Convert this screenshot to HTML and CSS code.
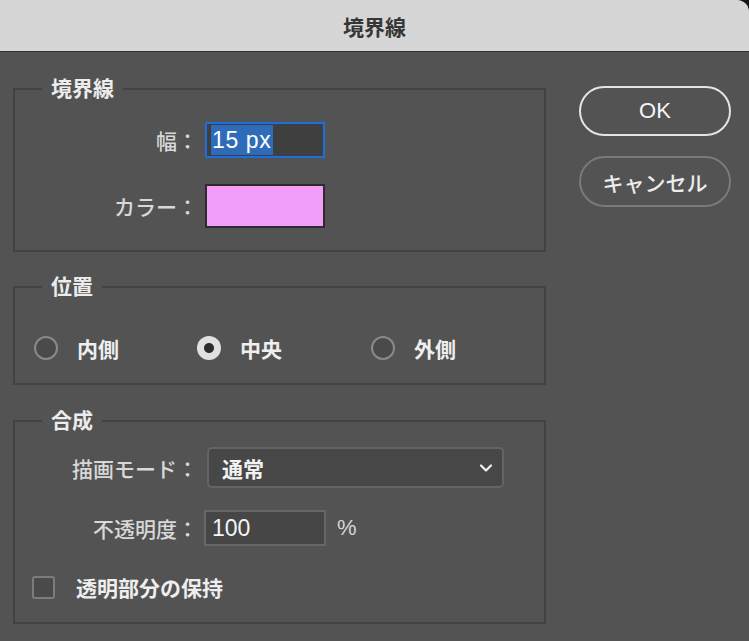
FILE: index.html
```html
<!DOCTYPE html>
<html lang="ja">
<head>
<meta charset="utf-8">
<title>境界線</title>
<link rel="stylesheet" href="styles.css">
</head>
<body>
<div class="window">
  <div class="titlebar">境界線</div>
  <div class="main">
    <div class="left">
      <fieldset class="group g1">
        <legend>境界線</legend>
        <div class="row">
          <span class="label">幅：</span>
          <div class="input focused"><span class="sel">15 px</span></div>
        </div>
        <div class="row row-color">
          <span class="label">カラー：</span>
          <div class="swatch"></div>
        </div>
      </fieldset>
      <fieldset class="group g2">
        <legend>位置</legend>
        <div class="radios">
          <div class="radio-item"><span class="radio"></span><span class="rlabel">内側</span></div>
          <div class="radio-item"><span class="radio checked"></span><span class="rlabel">中央</span></div>
          <div class="radio-item"><span class="radio"></span><span class="rlabel">外側</span></div>
        </div>
      </fieldset>
      <fieldset class="group g3">
        <legend>合成</legend>
        <div class="row">
          <span class="label">描画モード：</span>
          <div class="select"><span class="sel-text">通常</span>
            <svg class="chev" width="14" height="10" viewBox="0 0 14 10"><path d="M2 2.5 L7 7.5 L12 2.5" fill="none" stroke="#f0f0f0" stroke-width="2.2" stroke-linecap="round" stroke-linejoin="round"/></svg>
          </div>
        </div>
        <div class="row row-op">
          <span class="label">不透明度：</span>
          <div class="input plain">100</div>
          <span class="unit">%</span>
        </div>
        <div class="row row-check">
          <span class="checkbox"></span>
          <span class="clabel">透明部分の保持</span>
        </div>
      </fieldset>
    </div>
    <div class="right">
      <div class="btn primary">OK</div>
      <div class="btn secondary">キャンセル</div>
    </div>
  </div>
</div>
</body>
</html>
```
FILE: styles.css
```css
html {
  background: #15151c;
}
body {
  margin: 0;
  font-family: "Liberation Sans", "Noto Sans CJK JP", sans-serif;
  font-size: 21px;
  color: #e6e6e6;
}
.window {
  background: #535353;
  min-height: 641px;
  border-top-right-radius: 12px;
  overflow: hidden;
}
.titlebar {
  height: 51px;
  background: #d6d6d6;
  border-bottom: 1px solid #2e2e2e;
  display: flex;
  align-items: center;
  justify-content: center;
  font-weight: bold;
  font-size: 21px;
  color: #363636;
}
.main {
  display: flex;
  padding: 0 18px 0 13px;
  gap: 33px;
}
.left {
  width: 533px;
  padding-top: 25px;
  display: flex;
  flex-direction: column;
}
.right {
  width: 152px;
  padding-top: 34px;
  display: flex;
  flex-direction: column;
  gap: 20px;
}
.group {
  margin: 0;
  padding: 0;
  border: 2px solid #424242;
  min-width: 0;
}
.group legend {
  margin-left: 27px;
  padding: 0 9px;
  font-weight: bold;
  font-size: 21px;
  line-height: 24px;
  color: #ececec;
}
.row {
  display: flex;
  align-items: center;
}
.label {
  width: 183px;
  text-align: right;
  color: #d8d8d8;
  font-weight: 500;
  flex: none;
}
.g1 {
  padding: 21px 0 22px;
}
.row-color {
  margin-top: 26px;
}
.input {
  box-sizing: border-box;
  width: 120px;
  height: 36px;
  margin-left: 7px;
  background: #424242;
  display: flex;
  align-items: center;
  font-size: 22px;
}
.input.focused {
  border: 2px solid #1d6fe0;
  background: #3f3f3f;
  padding-left: 4px;
}
.sel {
  background: #2e6cba;
  color: #ffffff;
  line-height: 30px;
  padding: 0 2px 0 1px;
  font-size: 23px;
  letter-spacing: 0.6px;
}
.swatch {
  box-sizing: border-box;
  width: 120px;
  height: 44px;
  margin-left: 7px;
  background: #f29ef9;
  border: 2px solid #2c2c2c;
}
.g2 {
  margin-top: 23px;
  padding: 34px 0 20px;
}
.radios {
  display: grid;
  grid-template-columns: 163px 174px auto;
  height: 30px;
  align-items: center;
  padding-left: 19px;
}
.radio-item {
  display: flex;
  align-items: center;
  gap: 19px;
}
.radio {
  box-sizing: border-box;
  width: 24px;
  height: 24px;
  border-radius: 50%;
  border: 2px solid #8a8a8a;
  background: #4a4a4a;
  flex: none;
}
.radio.checked {
  border: none;
  background: radial-gradient(circle, #2c2c2c 4.5px, #e0e0e0 5.5px);
}
.rlabel {
  font-weight: bold;
  color: #eeeeee;
}
.g3 {
  margin-top: 24px;
  padding: 14px 0 20px;
}
.select {
  box-sizing: border-box;
  width: 297px;
  height: 41px;
  margin-left: 9px;
  background: #474747;
  border: 2px solid #646464;
  border-radius: 5px;
  display: flex;
  align-items: center;
  justify-content: space-between;
  padding: 0 9px 0 13px;
}
.sel-text {
  font-weight: bold;
  color: #f2f2f2;
}
.row-op {
  margin-top: 22px;
}
.input.plain {
  width: 122px;
  margin-left: 6px;
  border: 2px solid #676767;
  background: #464646;
  padding-left: 6px;
  color: #f4f4f4;
  font-size: 23px;
}
.unit {
  margin-left: 11px;
  color: #d6d6d6;
  font-size: 22px;
}
.row-check {
  margin-top: 26px;
  padding-left: 17px;
}
.checkbox {
  box-sizing: border-box;
  width: 23px;
  height: 23px;
  border-radius: 3px;
  border: 2px solid #7c7c7c;
  background: #4a4a4a;
  flex: none;
}
.clabel {
  margin-left: 21px;
  font-weight: bold;
  color: #eeeeee;
}
.btn {
  box-sizing: border-box;
  height: 50px;
  border-radius: 26px;
  display: flex;
  align-items: center;
  justify-content: center;
  font-size: 21px;
  font-weight: 500;
}
.btn.primary {
  border: 2px solid #e4e4e4;
  color: #f6f6f6;
  font-size: 22px;
}
.btn.secondary {
  height: 51px;
  border: 2px solid #7a7a7a;
  color: #ececec;
}
```
